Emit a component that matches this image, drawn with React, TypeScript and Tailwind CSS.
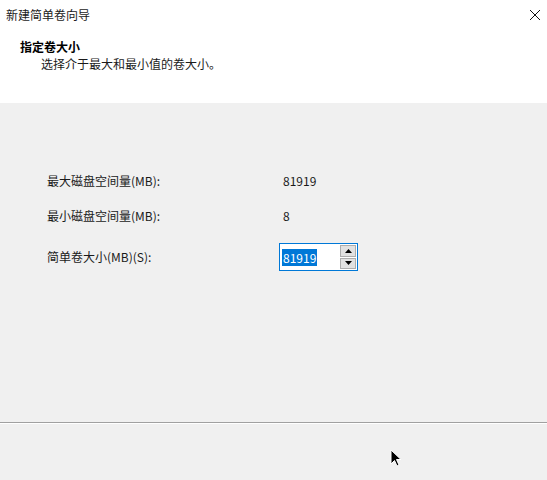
const FONT = {
	fontFamily: '"Microsoft YaHei UI", "Noto Sans CJK SC", "Noto Sans", sans-serif',
};

function Row({ label, children }: { label: string; children: React.ReactNode }) {
	return (
		<div className="flex h-[27px] items-center">
			<span className="w-[236px] text-[12px] text-[#1a1a1a]">{label}</span>
			{children}
		</div>
	);
}

function SpinBox() {
	return (
		<div className="flex h-[28px] w-[79px] border border-[#0078d7] bg-white">
			<div className="flex flex-1 items-center pl-[2px]">
				<span className="bg-[#0078d7] px-[1px] text-[12px] leading-[17px] text-white">
					81919
				</span>
			</div>
			<div className="my-[1px] mr-[1px] flex w-[16px] flex-col gap-[1px]">
				<button
					type="button"
					className="flex flex-1 items-center justify-center border border-[#adadad] bg-[#e1e1e1]"
				>
					<svg width="7" height="4" viewBox="0 0 7 4">
						<path d="M3.5 0 L7 4 L0 4 Z" fill="#000" />
					</svg>
				</button>
				<button
					type="button"
					className="flex flex-1 items-center justify-center border border-[#adadad] bg-[#e1e1e1]"
				>
					<svg width="7" height="4" viewBox="0 0 7 4">
						<path d="M0 0 L7 0 L3.5 4 Z" fill="#000" />
					</svg>
				</button>
			</div>
		</div>
	);
}

function Cursor() {
	return (
		<svg
			className="absolute left-[390px] top-[449px]"
			width="12"
			height="19"
			viewBox="0 0 12 19"
		>
			<path
				d="M1 1 L1 15 L4.5 11.5 L7 17 L9 16 L6.5 10.5 L11 10.5 Z"
				fill="#000"
				stroke="#fff"
				strokeWidth="1"
				strokeLinejoin="round"
			/>
		</svg>
	);
}

export default function App() {
	return (
		<div
			className="relative flex h-[480px] w-[547px] flex-col overflow-hidden bg-[#f0f0f0]"
			style={FONT}
		>
			<div className="h-[103px] bg-white">
				<div className="flex h-[30px] items-center justify-between pl-[6px] pr-[2px]">
					<span className="text-[12px] text-[#1a1a1a]">新建简单卷向导</span>
					<svg width="12" height="12" viewBox="0 0 12 12" className="mr-[4px]">
						<path d="M1 1 L11 11 M11 1 L1 11" stroke="#111" strokeWidth="1" />
					</svg>
				</div>
				<div className="pl-[20px] pt-[8px]">
					<p className="text-[12px] font-bold leading-[17px] text-[#000]">指定卷大小</p>
					<p className="pl-[21px] text-[12px] leading-[17px] text-[#1a1a1a]">
						选择介于最大和最小值的卷大小。
					</p>
				</div>
			</div>

			<div className="flex flex-1 flex-col gap-[8px] pl-[47px] pt-[64px]">
				<Row label="最大磁盘空间量(MB):">
					<span className="text-[12px] text-[#1a1a1a]">81919</span>
				</Row>
				<Row label="最小磁盘空间量(MB):">
					<span className="text-[12px] text-[#1a1a1a]">8</span>
				</Row>
				<div className="mt-[6px] flex items-center">
					<span className="w-[232px] text-[12px] text-[#1a1a1a]">简单卷大小(MB)(S):</span>
					<SpinBox />
				</div>
			</div>

			<div className="h-[58px] border-t border-[#a0a0a0]">
				<div className="h-[1px] bg-white" />
			</div>

			<Cursor />
		</div>
	);
}
